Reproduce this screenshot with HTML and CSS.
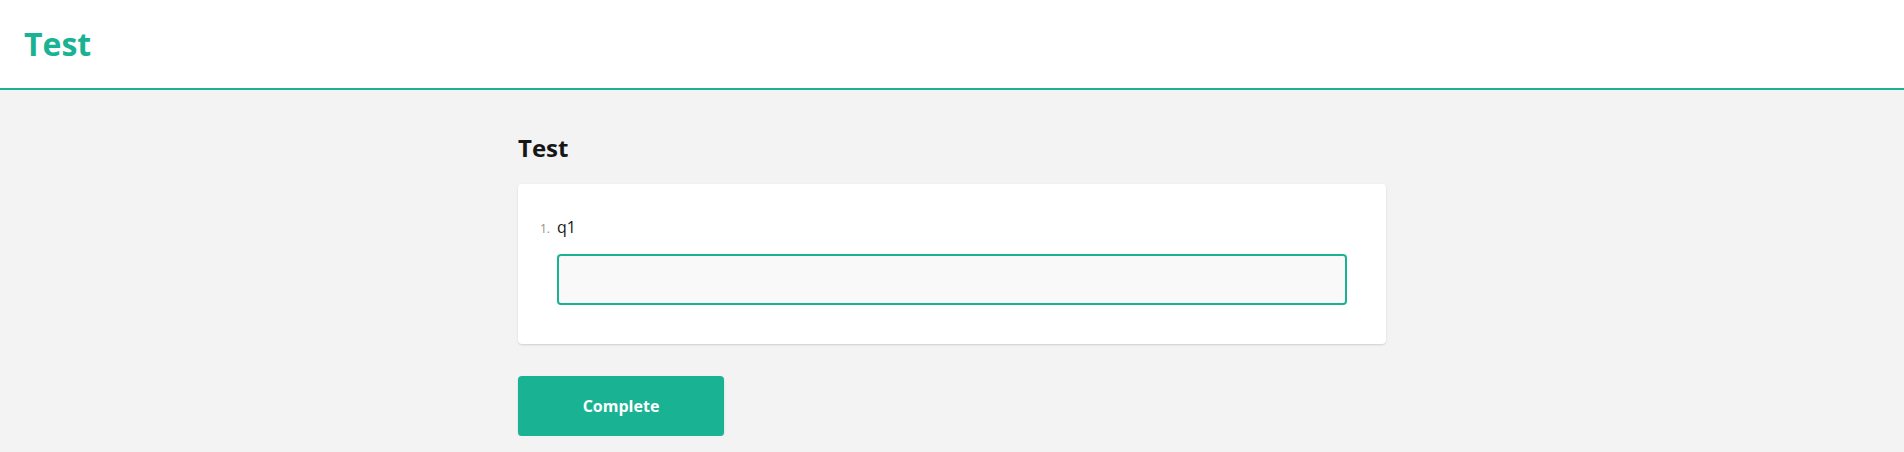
FILE: index.html
```html
<!DOCTYPE html>
<html>
<head>
<meta charset="utf-8">
<link rel="stylesheet" href="styles.css">
</head>
<body>
<header class="topbar">
  <div class="brand">Test</div>
</header>
<main class="survey">
  <h2 class="survey-title">Test</h2>
  <div class="card">
    <div class="q-title">
      <span class="q-num">1.</span>
      <span class="q-text">q1</span>
    </div>
    <input class="q-input" type="text">
  </div>
  <div class="nav">
    <button class="btn-complete">Complete</button>
  </div>
</main>
</body>
</html>
```

FILE: styles.css
```css
html, body {
  margin: 0;
  padding: 0;
}
body {
  background: #f3f3f3;
  font-family: "Open Sans", "Liberation Sans", sans-serif;
  color: #161616;
}
.topbar {
  background: #fff;
  height: 88px;
  border-bottom: 2px solid #19b394;
  display: flex;
  align-items: center;
  padding-left: 24px;
}
.brand {
  color: #19b394;
  font-size: 32px;
  font-weight: 700;
  line-height: 88px;
}
.survey {
  width: 868px;
  margin: 0 auto;
  padding-top: 42px;
}
.survey-title {
  margin: 0 0 20px 0;
  font-size: 24px;
  line-height: 32px;
  font-weight: 700;
  color: #161616;
}
.card {
  background: #fff;
  border-radius: 4px;
  box-shadow: 0 1px 2px rgba(0, 0, 0, 0.15);
  padding: 31px 39px 39px 39px;
  display: flex;
  flex-direction: column;
}
.q-title {
  display: flex;
  align-items: baseline;
  margin-left: -17px;
  height: 24px;
  line-height: 24px;
}
.q-num {
  width: 17px;
  font-size: 12px;
  color: #909090;
}
.q-text {
  font-size: 16px;
}
.q-input {
  margin-top: 15px;
  box-sizing: border-box;
  width: 100%;
  height: 51px;
  border: 2px solid #19b394;
  border-radius: 4px;
  background: #f9f9f9;
  outline: none;
  font-family: inherit;
  font-size: 16px;
}
.nav {
  display: flex;
  padding-top: 32px;
}
.btn-complete {
  width: 206px;
  height: 60px;
  background: #19b394;
  color: #fff;
  border: none;
  border-radius: 4px;
  box-shadow: 0 1px 2px rgba(0, 0, 0, 0.15);
  font-family: inherit;
  font-size: 16px;
  font-weight: 700;
}
```
